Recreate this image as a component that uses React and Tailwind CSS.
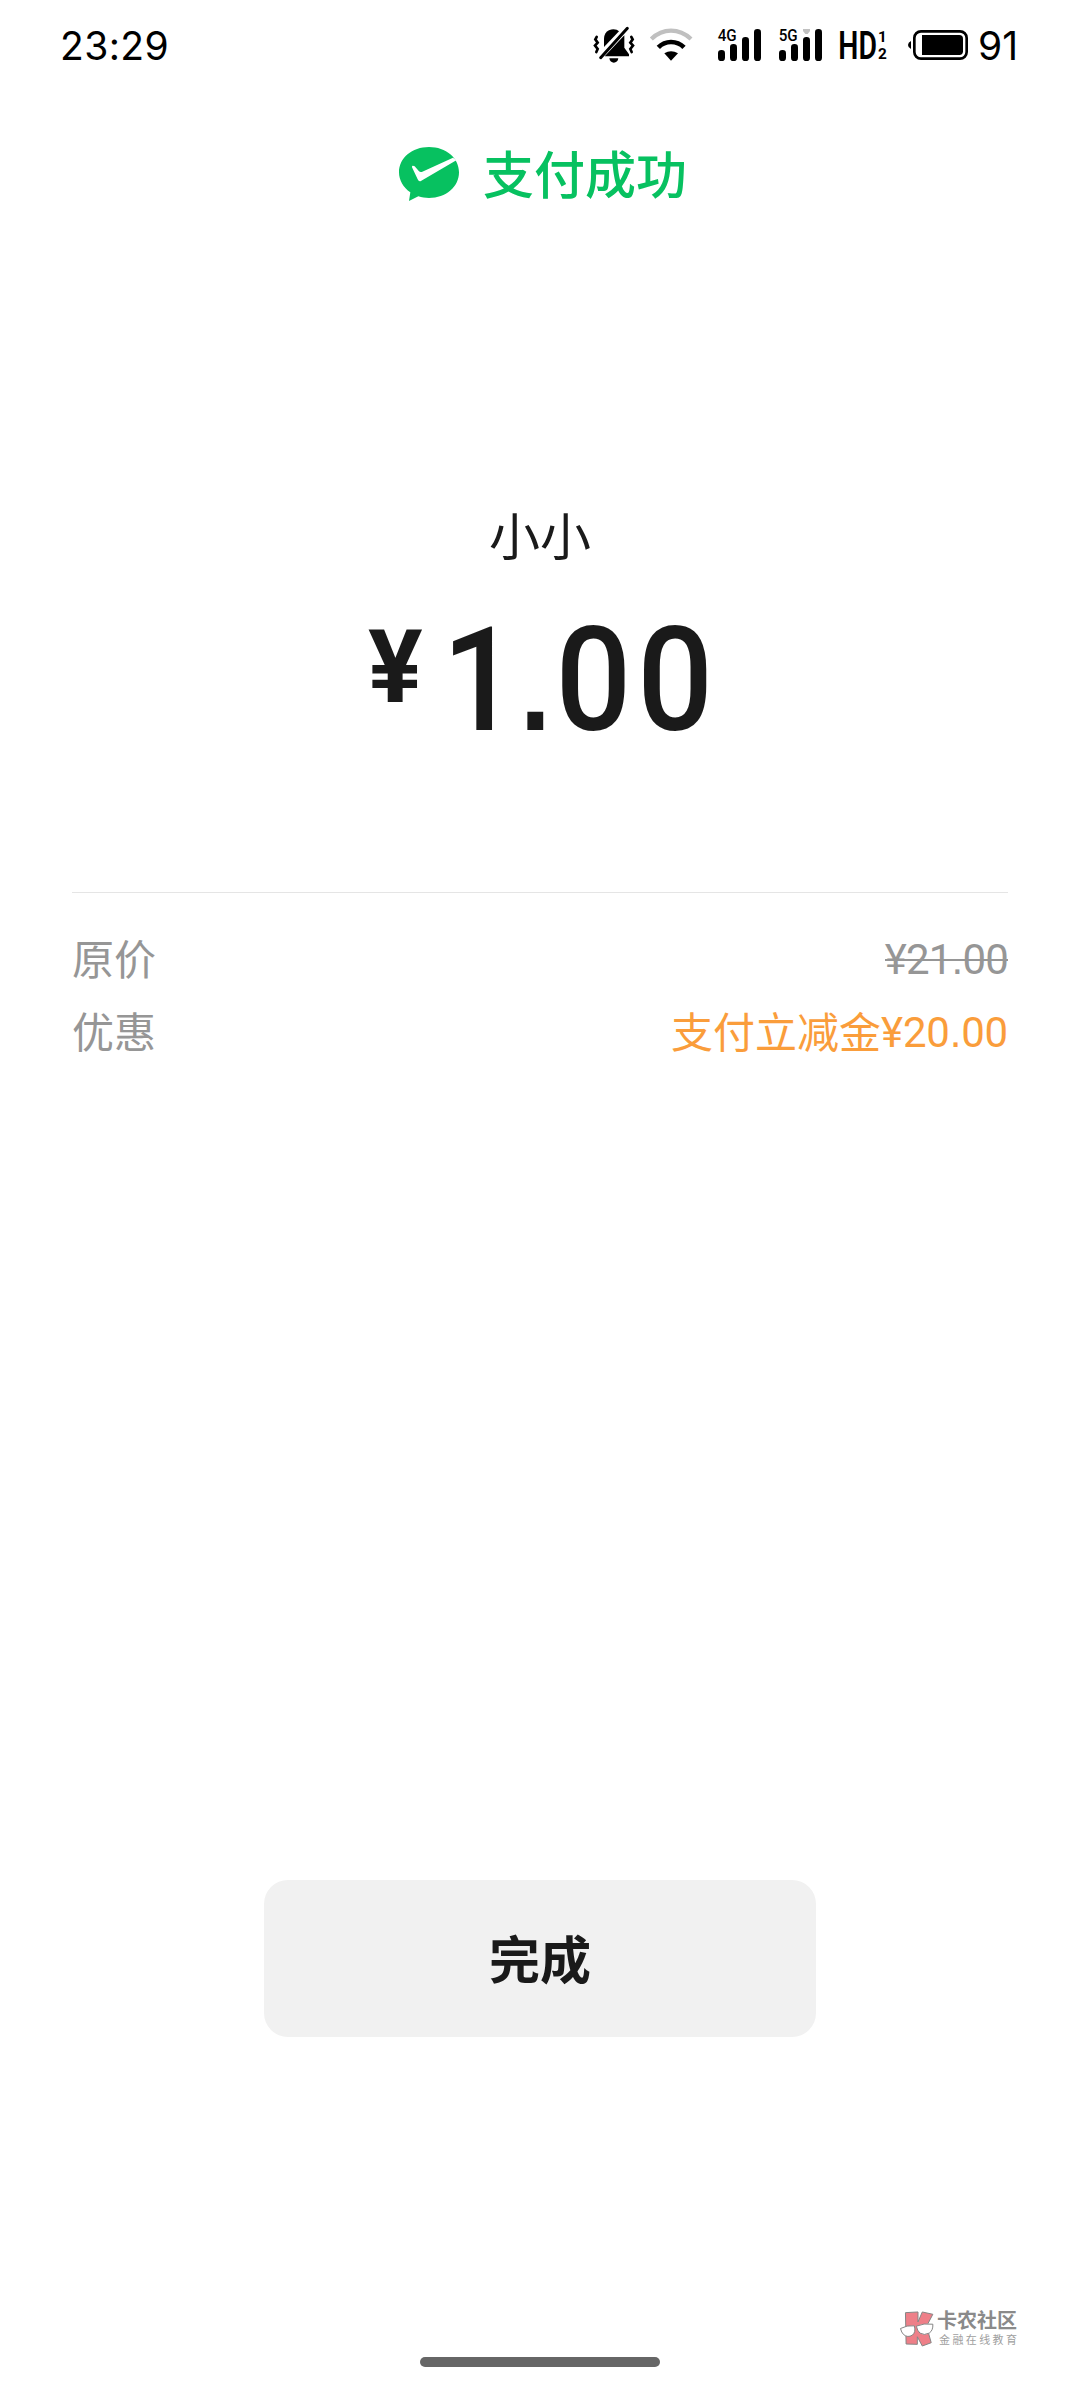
const details = [
  {
    id: "origin",
    label: "原价",
    text: "",
    price: "¥21.00",
    struck: true,
  },
  {
    id: "discount",
    label: "优惠",
    text: "支付立减金",
    price: "¥20.00",
    struck: false,
  },
];

function MutedBell() {
  return (
    <svg viewBox="36 30 132 120" className="h-10 w-11">
      <path d="M72 96V72C72 54 84 43 100 43C108 43 113 45 117 49Z" />
      <path d="M133 61V98L147 118V124H74Z" />
      <path
        d="M62 128L142 40"
        fill="none"
        stroke="#000"
        strokeWidth="9"
        strokeLinecap="round"
      />
      <path d="M88 130H115C114 139 108 143 101.500 143C95 143 89 139 88 130Z" />
      <g fill="none" stroke="#000" strokeWidth="8" strokeLinecap="round">
        <path d="M50 66L46 73L53 83L45 92L53 102L49 111" />
        <path d="M154 66L158 73L151 83L159 92L151 102L155 111" />
      </g>
    </svg>
  );
}

function Wifi() {
  return (
    <svg viewBox="204 30 138 120" className="ml-3 h-10 w-[46px]" fill="none">
      <path d="M214 72Q240 47 273 47Q306 47 333 72" stroke="#c0c0c0" strokeWidth="13" />
      <path d="M235 97Q251 81 273 81Q296 81 312 97" stroke="#000" strokeWidth="14" />
      <path d="M253 115Q273 102 294 115L273 137Z" fill="#000" />
    </svg>
  );
}

function Signal({ label, weak, className }) {
  return (
    <svg viewBox="411 30 138 120" className={`h-10 w-[46px] ${className}`}>
      <text
        x="413"
        y="78"
        fontSize="49"
        fontWeight="500"
        fontFamily="Roboto, sans-serif"
        textLength="57"
        lengthAdjust="spacingAndGlyphs"
      >
        {label}
      </text>
      <rect x="414" y="105" width="21" height="33" rx="10" />
      <rect x="450" y="87" width="21" height="51" rx="10" />
      <rect x="486" y="66" width="21" height="72" rx="10" />
      <rect x="522" y="42" width="21" height="96" rx="10" />
      {weak && <path d="M486 42H507V48L500 57H493L486 48Z" fill="#c0c0c0" />}
    </svg>
  );
}

function HdVoice() {
  return (
    <svg
      viewBox="57 30 150 120"
      className="ml-[15px] h-10 w-[50px] overflow-visible"
      fontFamily="Roboto, sans-serif"
    >
      <text
        x="55"
        y="132"
        fontSize="116"
        fontWeight="600"
        textLength="116"
        lengthAdjust="spacingAndGlyphs"
      >
        HD
      </text>
      <text x="174" y="80" fontSize="46" fontWeight="700">
        1
      </text>
      <text x="174" y="132" fontSize="46" fontWeight="700">
        2
      </text>
    </svg>
  );
}

function Battery() {
  return (
    <svg viewBox="261 30 186 120" className="ml-[18px] h-10 w-[62px]">
      <path d="M273 78V102Q264 98 264 90Q264 82 273 78Z" />
      <rect
        x="283"
        y="49"
        width="157"
        height="82"
        rx="20"
        fill="none"
        stroke="#000"
        strokeWidth="8"
      />
      <path d="M306 60H418Q429 60 429 71V109Q429 120 418 120H306Z" />
    </svg>
  );
}

function StatusBar() {
  return (
    <header className="flex h-[90px] items-center justify-between pr-[62px] pl-[60px] font-['Inter',sans-serif] text-[39px] leading-none text-black">
      <span className="tracking-[0.4px]">23:29</span>
      <div className="flex items-center">
        <MutedBell />
        <Wifi />
        <Signal label="4G" className="ml-[23px]" />
        <Signal label="5G" weak className="ml-[15px]" />
        <HdVoice />
        <Battery />
        <span className="ml-[9px] w-10">91</span>
      </div>
    </header>
  );
}

function PaySuccess() {
  return (
    <div className="mt-[42px] flex h-20 items-center justify-center gap-6 pl-[6px] text-[51px] leading-[80px] font-medium text-[#07c160]">
      <svg viewBox="57 51 180 162" className="mt-1 h-[54px] w-[60px]">
        <path
          fill="#07c160"
          d="M147 51C198 51 237 84 237 127C237 171 198 204 147 204C136 204 125 202 115 199L87 213L91 187C70 173 57 151 57 127C57 84 96 51 147 51Z"
        />
        <path
          fill="#fff"
          d="M96 112C95 107 99 106 104 109L117 124Q121 128 127 125L219 83L229 91L124 152Q117 157 113 148Z"
        />
      </svg>
      <h1>支付成功</h1>
    </div>
  );
}

// the decimal point is square, so it is set in another face than the digits
function Price({ value, struck }) {
  const [whole, cents] = value.split(".");

  return (
    <span
      className={`relative top-[3px] flex font-['Roboto',sans-serif] ${
        struck ? "tracking-[-0.8px]" : "tracking-[-0.2px]"
      }`}
    >
      {whole}
      <span className="font-['Liberation_Sans',sans-serif]">.</span>
      {cents}
      {struck && (
        <span className="absolute inset-x-0 top-[36px] h-[2px] bg-[#969696]" />
      )}
    </span>
  );
}

function DetailRow({ item }) {
  return (
    <div className="flex h-[73px] items-center justify-between text-[42px] leading-[73px]">
      <span className="text-[#969696]">{item.label}</span>
      <span className={`flex ${item.struck ? "text-[#969696]" : "text-[#fa9d3b]"}`}>
        {item.text}
        <Price value={item.price} struck={item.struck} />
      </span>
    </div>
  );
}

function Watermark() {
  return (
    <div className="flex h-10 w-[124px] items-center gap-[2px] text-[#8a8a8a]">
      <svg viewBox="58 64 108 112" className="mt-px h-[37px] w-9 shrink-0">
        <g fill="#ee7f88" stroke="#858585" strokeWidth="3" strokeLinejoin="round">
          <path d="M77 72L115 70L115 100L128 70L160 77L141 113L155 163L128 173L113 145V168L79 167Z" />
        </g>
        <g fill="#fff" stroke="#858585" strokeWidth="3">
          <path d="M62 120Q82 109 104 112Q109 132 98 140Q84 149 71 138Q65 132 62 120Z" />
          <path d="M110 113Q132 103 160 107Q161 126 149 134Q134 142 121 134Q113 127 110 113Z" />
        </g>
      </svg>
      <div className="whitespace-nowrap">
        <p className="text-[20px] leading-[20px] font-bold">卡农社区</p>
        <p className="mt-[3px] ml-[2px] text-[11px] leading-[13px] tracking-[2.4px] text-[#a0a0a0]">
          金融在线教育
        </p>
      </div>
    </div>
  );
}

export default function App() {
  return (
    <div className="flex h-[2400px] w-[1080px] flex-col overflow-hidden bg-white font-['Noto_Sans_CJK_SC',sans-serif] text-[#1a1a1a]">
      <StatusBar />
      <PaySuccess />

      <section className="mt-[282px] flex flex-col items-center">
        <p className="text-[51px] leading-[80px]">小小</p>
        <div className="mt-[25px] flex h-[153px] w-[344px] items-start font-['Roboto',sans-serif] leading-none">
          <span className="mt-[17px] w-[74px] shrink-0 text-[102px] font-bold">¥</span>
          <span className="mt-[9px] flex shrink-0 origin-left scale-x-92 items-baseline text-[145px] font-medium">
            1
            <span className="ml-[2px] font-['Liberation_Sans',sans-serif] text-[122px] font-bold">
              .
            </span>
            <span className="ml-[5px] tracking-[6.5px]">00</span>
          </span>
        </div>
      </section>

      <section className="mx-[72px] mt-[140px] border-t border-[#e5e5e5] pt-[27px]">
        {details.map((item) => (
          <DetailRow key={item.id} item={item} />
        ))}
      </section>

      <footer className="mt-auto flex flex-col items-center">
        <button className="h-[157px] w-[552px] rounded-3xl bg-[#f1f1f1] pb-[3px] text-[51px] font-bold">
          完成
        </button>
        <div className="mt-[271px] mr-[57px] self-end">
          <Watermark />
        </div>
        <div className="mt-[9px] mb-[33px] h-[10px] w-60 rounded-full bg-[#666]" />
      </footer>
    </div>
  );
}
